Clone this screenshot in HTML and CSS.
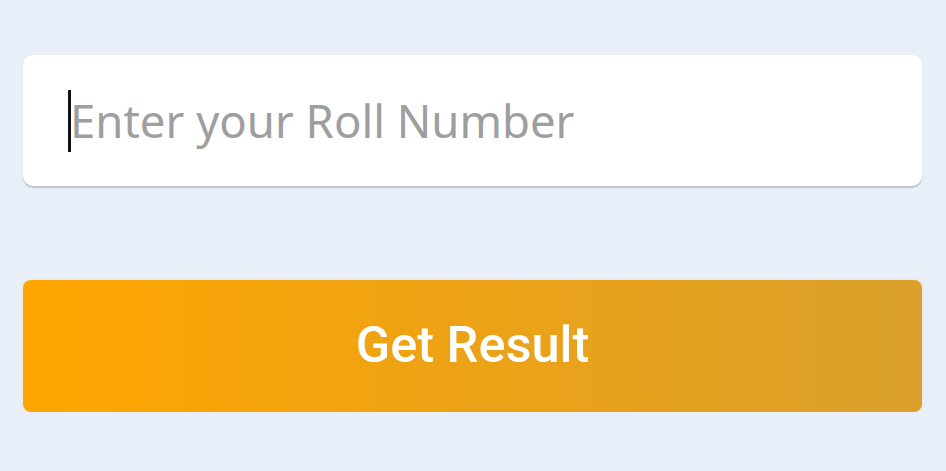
FILE: index.html
```html
<!DOCTYPE html>
<html lang="en">
<head>
    <meta charset="UTF-8">
    <meta name="viewport" content="width=device-width, initial-scale=1.0">
    <title>Check Result</title>
    <link rel="stylesheet" href="styles.css">
</head>
<body>
    <div class="container">
        <div class="input-card">
            <span class="caret"></span>
            <input type="text" class="roll-input" placeholder="Enter your Roll Number">
        </div>

        <button class="result-button">Get Result</button>
    </div>
</body>
</html>
```

FILE: styles.css
```css
* {
    box-sizing: border-box;
}

body {
    margin: 0;
    background: #e8eff8;
    font-family: 'Noto Sans', sans-serif;
}

.container {
    display: flex;
    flex-direction: column;
    gap: 94px;
    padding: 55px 24px 0 23px;
}

.input-card {
    position: relative;
    height: 131px;
    background: #ffffff;
    border-radius: 10px;
    box-shadow: 0 2px 1px rgba(0, 0, 0, 0.18);
    display: flex;
    align-items: center;
}

.caret {
    position: absolute;
    left: 45px;
    top: 35px;
    width: 3px;
    height: 62px;
    background: #111;
}

.roll-input {
    width: 100%;
    height: 100%;
    border: none;
    outline: none;
    background: transparent;
    padding: 0 0 2px 47px;
    font-family: 'Noto Sans', sans-serif;
    font-size: 45.5px;
    color: #333;
}

.roll-input::placeholder {
    color: #9e9e9e;
}

.result-button {
    height: 132px;
    padding: 0 0 4px;
    border: none;
    border-radius: 8px;
    background: linear-gradient(to right, #ffa500, #daa02c);
    box-shadow: 0 0 2px rgba(255, 200, 80, 0.5);
    color: #ffffff;
    font-family: 'Roboto', sans-serif;
    font-weight: 500;
    font-size: 50.5px;
    cursor: pointer;
}
```
